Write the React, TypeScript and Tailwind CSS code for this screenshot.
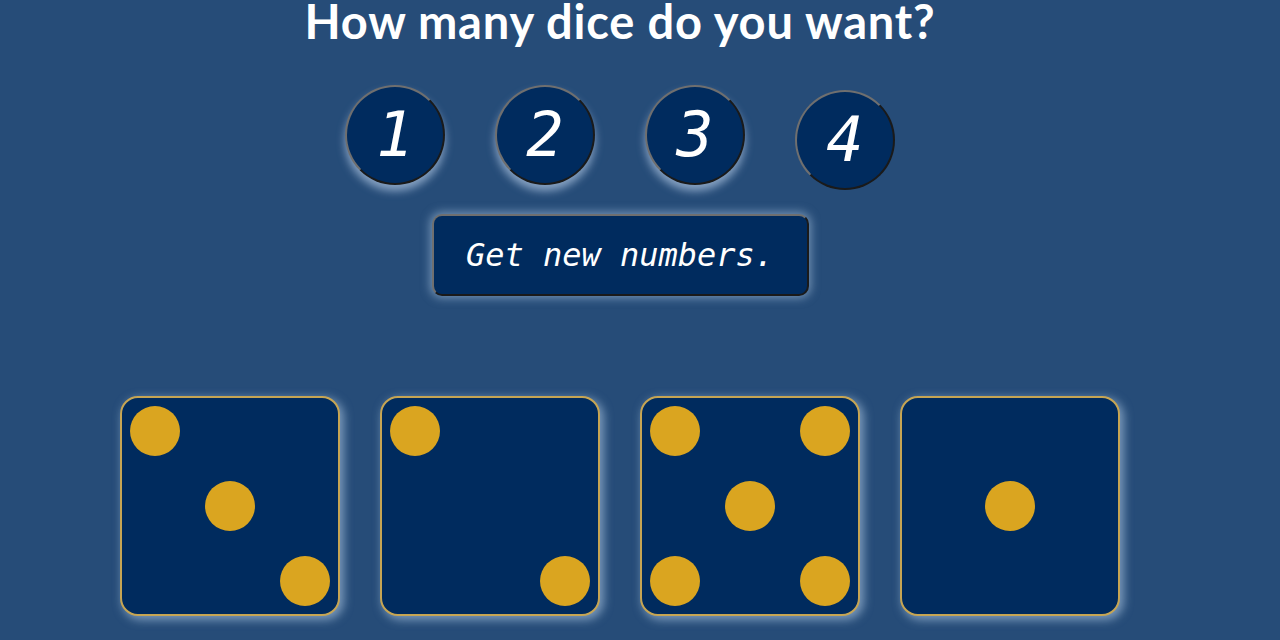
import React, { useState } from 'react';

type Pip = [number, number];

// pip positions in a 3x3 grid (row, col)
const FACES: Record<number, Pip[]> = {
  1: [[1, 1]],
  2: [[0, 0], [2, 2]],
  3: [[0, 0], [1, 1], [2, 2]],
  4: [[0, 0], [0, 2], [2, 0], [2, 2]],
  5: [[0, 0], [0, 2], [1, 1], [2, 0], [2, 2]],
  6: [[0, 0], [0, 2], [1, 0], [1, 2], [2, 0], [2, 2]],
};

const Die: React.FC<{ value: number }> = ({ value }) => {
  const pips = FACES[value];
  return (
    <div className="w-[220px] h-[220px] rounded-[18px] border-2 border-[#c6a553] bg-[#002b5e] p-2 shadow-[3px_3px_10px_1px_rgba(190,215,240,0.55)]">
      <div className="grid grid-cols-3 grid-rows-3 w-full h-full place-items-center">
        {[0, 1, 2].map(r =>
          [0, 1, 2].map(c => {
            const on = pips.some(([pr, pc]) => pr === r && pc === c);
            const place =
              (c === 0 ? 'justify-self-start ' : c === 2 ? 'justify-self-end ' : '') +
              (r === 0 ? 'self-start' : r === 2 ? 'self-end' : '');
            return (
              <div
                key={`${r}-${c}`}
                className={`w-[50px] h-[50px] rounded-full ${place} ${on ? 'bg-[#daa520]' : ''}`}
              />
            );
          })
        )}
      </div>
    </div>
  );
};

export default function App() {
  const [count, setCount] = useState(4);
  const [values] = useState([3, 2, 5, 1]);

  return (
    <div className="w-full h-[640px] bg-[#264c78] overflow-hidden">
      <div className="w-[1240px] flex flex-col items-center">
        {/* Title */}
        <h1 className="text-[47px] leading-[42px] font-bold text-white font-['Lato',sans-serif] tracking-[0.8px]">
          How many dice do you want?
        </h1>

        {/* Count picker */}
        <div className="flex gap-[50px] mt-[43px]">
          {[1, 2, 3, 4].map(n => {
            const active = n === count;
            return (
              <button
                key={n}
                onClick={() => setCount(n)}
                className={`w-[100px] h-[100px] rounded-full bg-[#002b5e] border-2 [border-style:outset] border-[#6f6f6f] text-white italic text-[62px] leading-none font-['DejaVu_Sans_Mono',monospace] flex items-center justify-center ${
                  active
                    ? 'translate-y-[5px]'
                    : 'shadow-[0_6px_8px_rgba(200,220,245,0.6)]'
                }`}
              >
                {n}
              </button>
            );
          })}
        </div>

        {/* Action */}
        <button className="mt-[29px] w-[377px] h-[82px] rounded-[10px] bg-[#002b5e] border-2 [border-style:outset] border-[#6f6f6f] text-white italic text-[32px] font-['DejaVu_Sans_Mono',monospace] shadow-[0_0_10px_2px_rgba(190,215,240,0.5)]">
          Get new numbers.
        </button>

        {/* Dice */}
        <div className="flex gap-[40px] mt-[100px]">
          {values.slice(0, count).map((v, i) => (
            <Die key={i} value={v} />
          ))}
        </div>
      </div>
    </div>
  );
}
